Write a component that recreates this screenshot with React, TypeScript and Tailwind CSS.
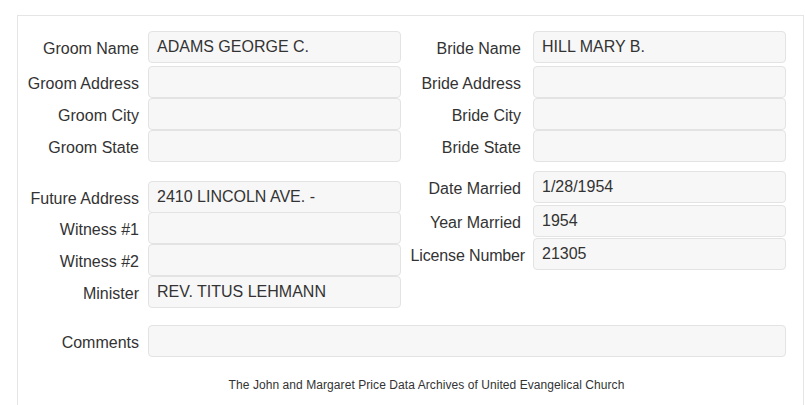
const groom = [
  { label: 'Groom Name', value: 'ADAMS GEORGE C.', cls: '' },
  { label: 'Groom Address', value: '', cls: 'mt-[3px]' },
  { label: 'Groom City', value: '', cls: '' },
  { label: 'Groom State', value: '', cls: '' },
]

const bride = [
  { label: 'Bride Name', value: 'HILL MARY B.', cls: '' },
  { label: 'Bride Address', value: '', cls: 'mt-[3px]' },
  { label: 'Bride City', value: '', cls: '' },
  { label: 'Bride State', value: '', cls: '' },
]

const leftLower = [
  { label: 'Future Address', value: '2410 LINCOLN AVE. -', cls: '' },
  { label: 'Witness #1', value: '', cls: '-mt-px' },
  { label: 'Witness #2', value: '', cls: '' },
  { label: 'Minister', value: 'REV. TITUS LEHMANN', cls: '' },
]

const rightLower = [
  { label: 'Date Married', value: '1/28/1954', cls: '' },
  { label: 'Year Married', value: '1954', cls: 'mt-[2px]' },
  { label: 'License Number', value: '21305', cls: 'mt-px', labelCls: '-mr-[4px] tracking-[-0.15px]' },
]

type Row = { label: string; value: string; cls: string; labelCls?: string }

function Field({ row, labelW, gap }: { row: Row; labelW: string; gap: string }) {
  return (
    <div className={`flex items-center ${row.cls}`}>
      <div className={`${labelW} shrink-0 text-right whitespace-nowrap pt-[3px] text-[16px] text-[#333]`}>
        <span className={`inline-block ${row.labelCls ?? ''}`}>{row.label}</span>
      </div>
      <div
        className={`${gap} h-[32px] w-[253px] shrink-0 rounded-[4px] border border-[#e3e3e3] bg-[#f7f7f7] pl-[8px] leading-[30px] text-[16px] text-[#333]`}
      >
        {row.value}
      </div>
    </div>
  )
}

export default function App() {
  return (
    <div className="h-[405px] w-[805px] overflow-hidden bg-white font-['Liberation_Sans',Arial,sans-serif]">
      <div className="ml-[17px] mt-[15px] h-[420px] w-[787px] border border-[#e5e5e5] pt-[15px]">
        <div className="flex">
          {/* Groom / left column */}
          <div className="flex w-[383px] flex-col">
            {groom.map(r => (
              <Field key={r.label} row={r} labelW="w-[121px]" gap="ml-[9px]" />
            ))}
            <div className="mt-[19px] flex flex-col">
              {leftLower.map(r => (
                <Field key={r.label} row={r} labelW="w-[121px]" gap="ml-[9px]" />
              ))}
            </div>
          </div>

          {/* Bride / right column */}
          <div className="flex flex-col">
            {bride.map(r => (
              <Field key={r.label} row={r} labelW="w-[120px]" gap="ml-[12px]" />
            ))}
            <div className="mt-[9px] flex flex-col">
              {rightLower.map(r => (
                <Field key={r.label} row={r} labelW="w-[120px]" gap="ml-[12px]" />
              ))}
            </div>
          </div>
        </div>

        {/* Comments */}
        <div className="mt-[17px] flex items-center">
          <div className="w-[121px] shrink-0 pt-[3px] text-right text-[16px] text-[#333]">Comments</div>
          <div className="ml-[9px] h-[32px] w-[638px] rounded-[4px] border border-[#e3e3e3] bg-[#f7f7f7]" />
        </div>

        <div className="mt-[19px] pl-[32px] text-center text-[12px] tracking-[0.07px] text-[#333]">
          The John and Margaret Price Data Archives of United Evangelical Church
        </div>
      </div>
    </div>
  )
}
